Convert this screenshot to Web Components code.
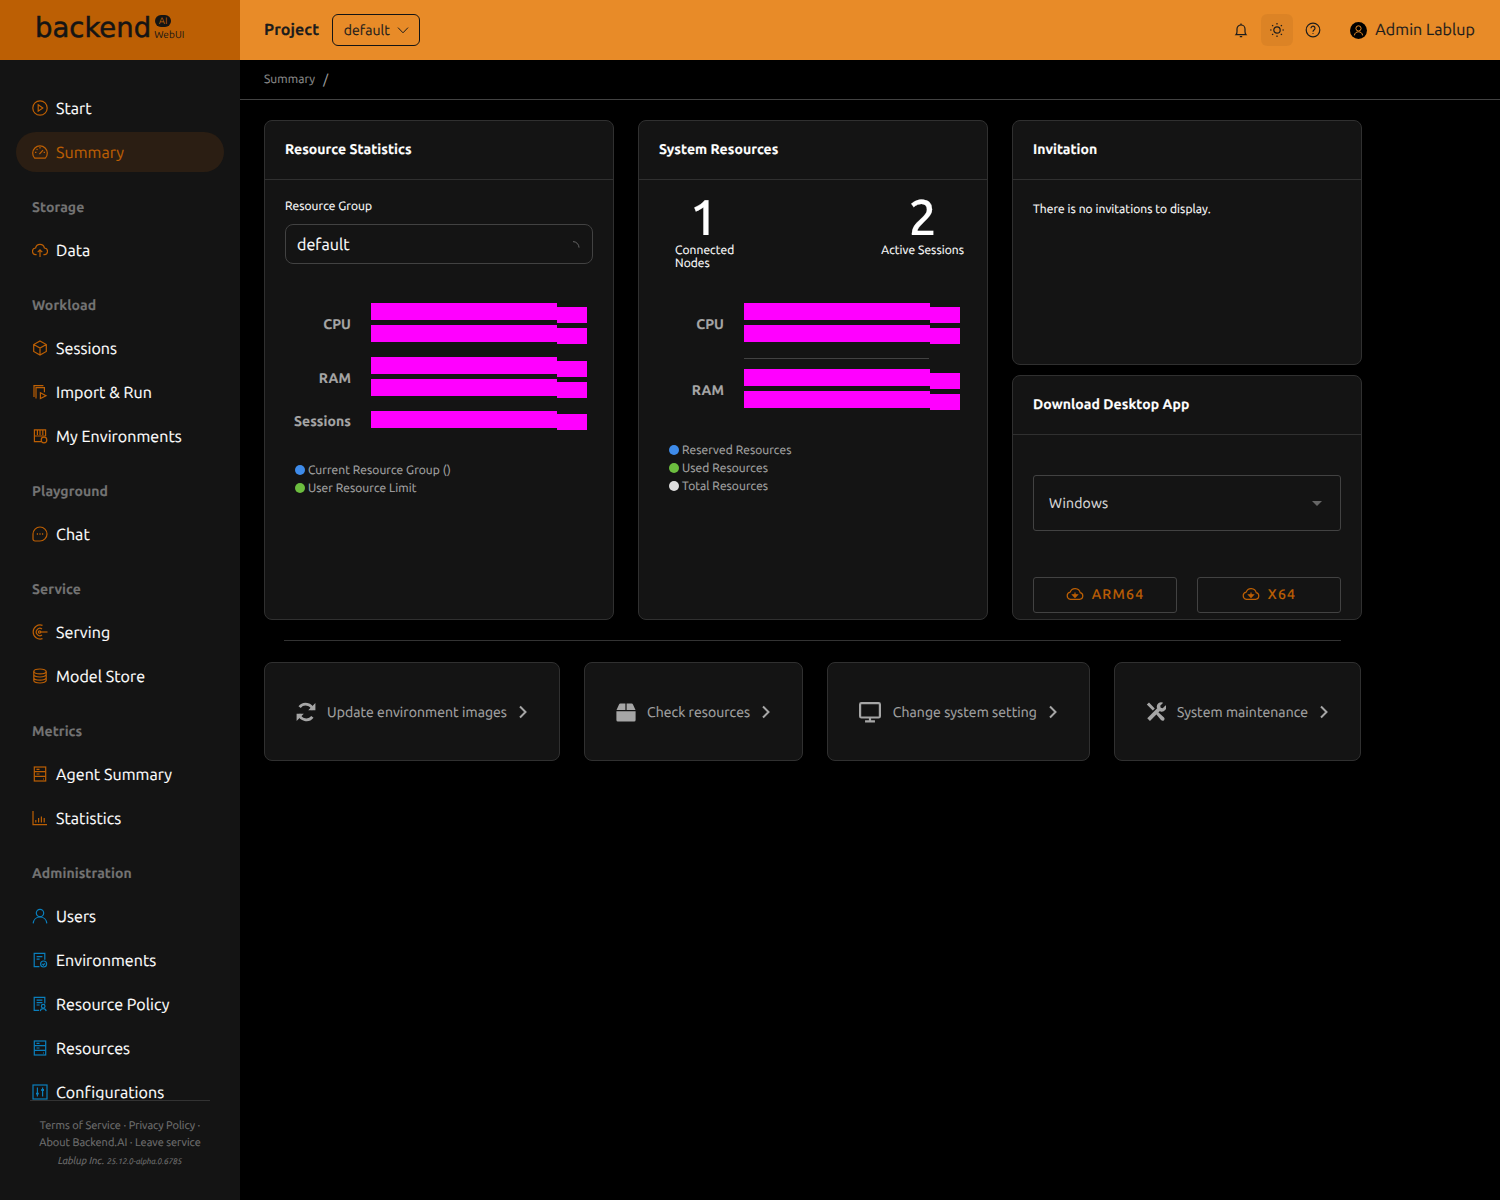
<!DOCTYPE html>
<html lang="en">
<head>
<meta charset="utf-8">
<title>Backend.AI WebUI</title>
<style>
	html, body {margin:0; height:100%; background:#000; overflow:hidden;}
	body {font-family:Ubuntu, Lato, "Noto Sans", sans-serif; color:#fff; text-rendering:geometricPrecision; letter-spacing:.08px; -webkit-text-stroke:.15px;}
</style>
</head>
<body>

<app-shell>
	<side-bar slot="sidebar">
		<nav-item icon="start">Start</nav-item>
		<nav-item icon="summary" active>Summary</nav-item>
		<nav-label>Storage</nav-label>
		<nav-item icon="data">Data</nav-item>
		<nav-label>Workload</nav-label>
		<nav-item icon="sessions">Sessions</nav-item>
		<nav-item icon="importrun">Import &amp; Run</nav-item>
		<nav-item icon="myenv">My Environments</nav-item>
		<nav-label>Playground</nav-label>
		<nav-item icon="chat">Chat</nav-item>
		<nav-label>Service</nav-label>
		<nav-item icon="serving">Serving</nav-item>
		<nav-item icon="modelstore">Model Store</nav-item>
		<nav-label>Metrics</nav-label>
		<nav-item icon="server">Agent Summary</nav-item>
		<nav-item icon="stats">Statistics</nav-item>
		<nav-label>Administration</nav-label>
		<nav-item icon="users" admin>Users</nav-item>
		<nav-item icon="envdoc" admin>Environments</nav-item>
		<nav-item icon="policy" admin>Resource Policy</nav-item>
		<nav-item icon="server" admin>Resources</nav-item>
		<nav-item icon="config" admin>Configurations</nav-item>
	</side-bar>

	<top-bar slot="main"></top-bar>
	<crumb-bar slot="main">Summary</crumb-bar>

	<dash-board slot="main">
		<dash-card title="Resource Statistics" slot="stats">
			<group-select></group-select>
			<bar-panel label-width="58" style="margin:39px 0 0 8px">
				<bar-group label="CPU">
					<mag-bar drop="4"></mag-bar>
					<mag-bar drop="3"></mag-bar>
				</bar-group>
				<bar-group label="RAM">
					<mag-bar drop="4"></mag-bar>
					<mag-bar drop="3"></mag-bar>
				</bar-group>
				<bar-group label="Sessions">
					<mag-bar drop="3"></mag-bar>
				</bar-group>
			</bar-panel>
			<chart-legend style="margin:32px 0 0 10px">
				<legend-item color="#3e8bea">Current Resource Group ()</legend-item>
				<legend-item color="#6cbd3f">User Resource Limit</legend-item>
			</chart-legend>
		</dash-card>

		<dash-card title="System Resources" slot="system" flush>
			<count-row>
				<big-count value="1" style="width:58px">Connected Nodes</big-count>
				<big-count value="2">Active Sessions</big-count>
			</count-row>
			<bar-panel label-width="65" style="margin:33px 0 0 0">
				<bar-group label="CPU">
					<mag-bar drop="4"></mag-bar>
					<mag-bar drop="3"></mag-bar>
				</bar-group>
				<rule-line></rule-line>
				<bar-group label="RAM">
					<mag-bar drop="4"></mag-bar>
					<mag-bar drop="3"></mag-bar>
				</bar-group>
			</bar-panel>
			<chart-legend style="margin:32px 0 0 10px">
				<legend-item color="#3e8bea">Reserved Resources</legend-item>
				<legend-item color="#6cbd3f">Used Resources</legend-item>
				<legend-item color="#e0e0e0">Total Resources</legend-item>
			</chart-legend>
		</dash-card>

		<dash-card title="Invitation" slot="invite">
			<span style="font-size:12px;line-height:18px;display:block;margin-top:1px">There is no invitations to display.</span>
		</dash-card>

		<dash-card title="Download Desktop App" slot="download">
			<download-form></download-form>
		</dash-card>

		<action-card icon="sync" slot="actions">Update environment images</action-card>
		<action-card icon="box" slot="actions">Check resources</action-card>
		<action-card icon="monitor" slot="actions">Change system setting</action-card>
		<action-card icon="tools" slot="actions">System maintenance</action-card>
	</dash-board>
</app-shell>

<script>
const ICONS = {
	// sidebar icons, 16 box
	start: `<circle cx="8" cy="8" r="7.2"/><path d="M6.2 4.8 10.8 8l-4.6 3.2z"/>`,
	summary: `<path d="M2.7 14.2a7.3 7.3 0 1 1 10.6 0z"/><path d="M7.4 10.2 11 6.2M8 3v1.4M3 8.4h1.4M11.6 8.4H13M4.6 4.9l.9.9"/>`,
	data: `<path d="M4.6 12.6H4a3.3 3.3 0 0 1-.4-6.6 4.5 4.5 0 0 1 8.8 0 3.3 3.3 0 0 1-.4 6.6h-.6"/><path d="M8 15V8M5.7 10.2 8 7.9l2.3 2.3"/>`,
	sessions: `<path d="M8 1l6.3 3.5v7L8 15l-6.3-3.5v-7zM1.7 4.5 8 8l6.3-3.5M8 8v7"/>`,
	importrun: `<path d="M2 13V1.6h9.4M4 14.6V3.6h8.4v4.6"/><path d="M8.4 8.8v5.8l5.6-2.9z"/>`,
	myenv: `<path d="M9 13.6H2.4V1.8h11.2v6.4"/><path d="M5.4 2v5M8 2v5M10.8 2v5M2.4 8h11"/><circle cx="12" cy="12" r="2.8"/>`,
	chat: `<path d="M8 1a7 7 0 1 1 0 14H3a2 2 0 0 1-2-2V8a7 7 0 0 1 7-7z"/><path d="M4.8 8h1.2M7.4 8h1.2M10 8h1.2" stroke-width="1.4"/>`,
	serving: `<path d="M10.5 1.4A7 7 0 1 0 10.5 14.6M10 4.9A3.7 3.7 0 1 0 10 11.1"/><circle cx="7.6" cy="8" r="1.2"/><path d="M8 8h7.5"/>`,
	modelstore: `<ellipse cx="8" cy="3.4" rx="6.2" ry="2.4"/><path d="M1.8 3.4v9.2c0 1.3 2.8 2.4 6.2 2.4s6.2-1.1 6.2-2.4V3.4M1.8 6.6c0 1.3 2.8 2.4 6.2 2.4s6.2-1.1 6.2-2.4M1.8 9.8c0 1.3 2.8 2.4 6.2 2.4s6.2-1.1 6.2-2.4"/>`,
	server: `<rect x="2.3" y="1" width="11.4" height="14"/><path d="M2.3 5.7h11.4M2.3 10.4h11.4M4.5 3.4h3M4.5 8h3M11 13h1"/>`,
	stats: `<path d="M1 1v13.6h14"/><path d="M3.8 12.5v-2.5M6.6 12.5V8M9.4 12.5V6.5M12.2 12.5V8"/>`,
	users: `<circle cx="8" cy="5" r="3.7"/><path d="M1.2 15.4c.3-3.6 3-6.4 6.8-6.4s6.5 2.8 6.8 6.4"/>`,
	envdoc: `<path d="M7.4 14.6H2.2V1.4h10.6v6.4"/><path d="M4.6 4.6h5.8M4.6 7.2h3"/><circle cx="11.6" cy="12" r="3"/><path d="M10.4 12l1 1 1.4-1.6"/>`,
	policy: `<path d="M7 14.4H2.2V1.4h10.6v6"/><path d="M4.6 4.2h5.8M4.6 6.6h5.8M4.6 9h3"/><circle cx="11.2" cy="10.2" r="1.8"/><path d="M8.2 15.2c.3-1.6 1.5-2.6 3-2.6s2.7 1 3 2.6"/>`,
	config: `<rect x="1" y="1" width="14" height="14"/><path d="M5.4 3.4v9.2M10.6 3.4v9.2"/><path d="M4 9.6h2.8M9.2 6h2.8" stroke-width="1.8"/>`,
	// header icons, 16 box
	bell: `<path d="M3 12.6c.8-.9 1-1.6 1-3.2V7a4 4 0 0 1 8 0v2.4c0 1.6.2 2.3 1 3.2z"/><path d="M6.8 14.6h2.4M8 1.4V3"/>`,
	sun: `<circle cx="8" cy="8" r="3.2"/><path d="M8 1v1.6M8 13.4V15M1 8h1.6M13.4 8H15M3.1 3.1l1.1 1.1M11.8 11.8l1.1 1.1M3.1 12.9l1.1-1.1M11.8 4.2l1.1-1.1"/>`,
	help: `<circle cx="8" cy="8" r="6.8"/><path d="M6 6.2a2 2 0 1 1 3.2 1.6C8.4 8.4 8 8.8 8 9.8M8 11.2v.8"/>`,
	// download cloud, 18 wide
	cloud: `<path d="M4.4 14.4h9.2a3.4 3.4 0 0 0 .6-6.7 5.2 5.2 0 0 0-10-.6 3.7 3.7 0 0 0 .2 7.3z"/><path d="M9 7.4v3M6.6 9.8h4.8L9 12.4z" fill="currentColor"/>`,
	// action icons, 20 box
	sync: `<path d="M17 8A7.6 7.6 0 0 0 3.6 5.2M3 12a7.6 7.6 0 0 0 13.4 2.8" stroke-width="2.8"/><path d="M19.4 1v7.2h-7.2zM.6 19v-7.2h7.2z" fill="currentColor" stroke="none"/>`,
	box: `<path d="M.5 8 3 2.4A1.5 1.5 0 0 1 4.4 1.4H9.4V8zM10.6 1.4h5a1.5 1.5 0 0 1 1.4 1L19.5 8h-8.9zM.4 9.2h19.2V18a1.5 1.5 0 0 1-1.5 1.5H1.9A1.5 1.5 0 0 1 .4 18z" fill="currentColor" stroke="none"/>`,
	monitor: `<rect x="1" y="2" width="18" height="13" rx="1.2" stroke-width="2"/><path d="M10 15v3M5.5 18.6h9" stroke-width="2"/>`,
	tools: `<path d="M.8 2.6 3 .6 8.8 6.4 6.8 8.4zM9.6 11.4l1.8-1.8 6.4 5.6c1 1 1 2.2.2 3s-2 .8-3-.2z" fill="currentColor" stroke="none"/><path d="M2.6 17.6 13 7.2" stroke-width="3.8"/><path d="M11 6a4.4 4.4 0 0 1 6.2-5.2l-3 3 .5 2 2 .5 3-3a4.4 4.4 0 0 1-5.2 6.2z" fill="currentColor" stroke="none"/>`
};

class uiIcon extends HTMLElement {
	connectedCallback() {
		const size = this.getAttribute('size') || 16;
		const box = this.getAttribute('box') || 16;
		const line = this.getAttribute('line') || 1.2;
		this.attachShadow({ mode: 'open' }).innerHTML = `
			<style>:host {display:inline-flex; flex:none; width:${size}px; height:${size}px;} svg {display:block;}</style>
			<svg width="${size}" height="${size}" viewBox="0 0 ${box} ${box}" fill="none" stroke="currentColor" stroke-width="${line}">${ICONS[this.getAttribute('name')] || ''}</svg>`;
	}
}

class appShell extends HTMLElement {
	connectedCallback() {
		this.attachShadow({ mode: 'open' }).innerHTML = `
			<style>
			:host {display:grid; grid-template-columns:240px 1fr; height:100vh;}
			.main {display:flex; flex-direction:column; min-width:0;}
			</style>
			<slot name="sidebar"></slot>
			<div class="main"><slot name="main"></slot></div>`;
	}
}

class sideBar extends HTMLElement {
	connectedCallback() {
		this.attachShadow({ mode: 'open' }).innerHTML = `
			<style>
			:host {display:flex; flex-direction:column; height:100vh; background:#141414;}
			.logo {flex:none; height:60px; background:#bc5f04; color:#141414; display:flex; padding-left:35px; box-sizing:border-box;}
			.word {font:400 27.5px/56px "DejaVu Sans", sans-serif; -webkit-text-stroke:.5px #141414; letter-spacing:0;}
			.mark {margin:15px 0 0 3px; display:flex; flex-direction:column; align-items:flex-start; -webkit-text-stroke:0;}
			.ai {background:#141414; color:#bc5f04; font-size:9.5px; line-height:12px; width:16px; text-align:center; border-radius:6px; margin-left:1px;}
			.web {font-size:10px; line-height:13px; margin-top:1px;}
			nav {flex:1; min-height:0; overflow:hidden; padding:28px 16px 0;}
			footer {flex:none; height:100px; margin:0 30px; box-sizing:border-box; border-top:1px solid #333; padding-top:17px; color:#707070; font-size:11px; line-height:17px; text-align:center; letter-spacing:0;}
			.ver {font-style:italic; font-size:10px; line-height:18px;}
			.ver small {font-size:8px;}
			</style>
			<div class="logo">
				<span class="word">backend</span>
				<span class="mark"><span class="ai">AI</span><span class="web">WebUI</span></span>
			</div>
			<nav><slot></slot></nav>
			<footer>
				<div>Terms of Service · Privacy Policy ·</div>
				<div>About Backend.AI · Leave service</div>
				<div class="ver">Lablup Inc. <small>25.12.0-alpha.0.6785</small></div>
			</footer>`;
	}
}

class navItem extends HTMLElement {
	connectedCallback() {
		const tint = this.hasAttribute('admin') ? '#0a7fbd' : '#bc5f04';
		this.attachShadow({ mode: 'open' }).innerHTML = `
			<style>
			:host {display:flex; align-items:center; gap:8px; height:40px; margin-bottom:4px; padding-left:16px; border-radius:20px; font-size:16px; color:#fff;}
			:host([active]) {background:#2b1e13; color:#bc5f04;}
			ui-icon {color:${tint};}
			span {padding-top:2px;}
			</style>
			<ui-icon name="${this.getAttribute('icon')}"></ui-icon><span><slot></slot></span>`;
	}
}

class navLabel extends HTMLElement {
	connectedCallback() {
		this.attachShadow({ mode: 'open' }).innerHTML = `
			<style>:host {display:block; margin:24px 0 12px; padding-left:16px; height:22px; line-height:22px; font-size:14px; font-weight:700; color:#737373;}</style>
			<slot></slot>`;
	}
}

class topBar extends HTMLElement {
	connectedCallback() {
		this.attachShadow({ mode: 'open' }).innerHTML = `
			<style>
			:host {display:flex; flex:none; align-items:center; height:60px; padding:0 25px 0 24px; background:#e88b28; color:#1c1c1c;}
			b {font-size:16px; margin-right:12.6px;}
			.project {display:flex; align-items:center; gap:7px; height:32px; box-sizing:border-box; padding:0 10px 0 11px; width:88px; border:1px solid #141414; border-radius:6px; font-size:14px;}
			.project svg {flex:none;}
			.tools {margin-left:auto; display:flex; align-items:center; gap:4px;}
			.btn {display:flex; align-items:center; justify-content:center; width:32px; height:32px; border-radius:6px;}
			.btn.on {background:rgba(0,0,0,.05);}
			.user {display:flex; align-items:center; gap:8px; margin-left:17px; font-size:16px;}
			.avatar {display:block;}
			</style>
			<b>Project</b>
			<div class="project">default
				<svg width="12" height="12" viewBox="0 0 12 12" fill="none" stroke="#1c1c1c"><path d="M1 3.6 6 8.8l5-5.2"/></svg>
			</div>
			<div class="tools">
				<span class="btn"><ui-icon name="bell"></ui-icon></span>
				<span class="btn on"><ui-icon name="sun"></ui-icon></span>
				<span class="btn"><ui-icon name="help"></ui-icon></span>
				<span class="user">
					<svg class="avatar" width="17" height="17" viewBox="0 0 17 17"><circle cx="8.5" cy="8.5" r="8.5" fill="#000"/><g fill="none" stroke="#e88b28"><circle cx="8.5" cy="6.4" r="2.6"/><path d="M4.4 13.4c.3-2.4 2-3.6 4.1-3.6s3.8 1.2 4.1 3.6"/></g></svg>
					Admin Lablup
				</span>
			</div>`;
	}
}

class crumbBar extends HTMLElement {
	connectedCallback() {
		this.attachShadow({ mode: 'open' }).innerHTML = `
			<style>
			:host {display:flex; flex:none; align-items:center; height:40px; box-sizing:border-box; padding:0 24px; border-bottom:1px solid #424242; color:#8c8c8c; font-size:12px;}
			i {margin-left:8px; font-style:normal; color:#a6a6a6; font-size:13px;}
			</style>
			<slot></slot><i>/</i>`;
	}
}

class dashBoard extends HTMLElement {
	connectedCallback() {
		this.attachShadow({ mode: 'open' }).innerHTML = `
			<style>
			:host {display:block; padding:20px 24px;}
			.cards {display:grid; grid-template-columns:repeat(3, 350px); gap:24px;}
			.right {display:flex; flex-direction:column; gap:10px; height:500px;}
			::slotted([slot=stats]), ::slotted([slot=system]) {height:500px;}
			::slotted([slot=invite]), ::slotted([slot=download]) {height:245px;}
			hr {margin:20px 20px 21px; width:1057px; height:1px; border:0; background:#333;}
			.actions {display:flex; gap:24px;}
			</style>
			<div class="cards">
				<slot name="stats"></slot>
				<slot name="system"></slot>
				<div class="right"><slot name="invite"></slot><slot name="download"></slot></div>
			</div>
			<hr>
			<div class="actions"><slot name="actions"></slot></div>`;
	}
}

class dashCard extends HTMLElement {
	connectedCallback() {
		const padTop = this.hasAttribute('flush') ? 0 : 20;
		this.attachShadow({ mode: 'open' }).innerHTML = `
			<style>
			:host {display:flex; flex-direction:column; box-sizing:border-box; background:#141414; border:1px solid #303030; border-radius:8px; overflow:hidden; color:#fff;}
			h2 {flex:none; margin:0; height:59px; box-sizing:border-box; line-height:57px; padding:0 20px; font-size:14px; font-weight:700; border-bottom:1px solid #303030;}
			.body {flex:1; min-height:0; padding:${padTop}px 20px 0;}
			</style>
			<h2>${this.getAttribute('title')}</h2>
			<div class="body"><slot></slot></div>`;
	}
}

class groupSelect extends HTMLElement {
	connectedCallback() {
		this.attachShadow({ mode: 'open' }).innerHTML = `
			<style>
			:host {display:block;}
			label {display:block; font-size:12px; line-height:12px; margin:1px 0 11px;}
			.box {display:flex; align-items:center; justify-content:space-between; height:40px; box-sizing:border-box; padding:2px 11px 0; border:1px solid #424242; border-radius:8px; font-size:16px;}
			</style>
			<label>Resource Group</label>
			<div class="box">default
				<svg width="8" height="8" viewBox="0 0 8 8" fill="none" stroke="#666"><path d="M0 .6A6 6 0 0 1 6 6.6"/></svg>
			</div>`;
	}
}

class barPanel extends HTMLElement {
	connectedCallback() {
		this.style.setProperty('--label-width', this.getAttribute('label-width') + 'px');
		this.attachShadow({ mode: 'open' }).innerHTML = `
			<style>:host {display:flex; flex-direction:column; gap:15px;}</style>
			<slot></slot>`;
	}
}

class barGroup extends HTMLElement {
	connectedCallback() {
		this.attachShadow({ mode: 'open' }).innerHTML = `
			<style>
			:host {display:flex; align-items:center; gap:20px;}
			b {flex:none; width:var(--label-width); text-align:right; font-size:14px; line-height:14px; color:#a6a6a6; padding-top:1px; margin-bottom:-1px;}
			.bars {display:flex; flex-direction:column; gap:5px;}
			</style>
			<b>${this.getAttribute('label')}</b>
			<div class="bars"><slot></slot></div>`;
	}
}

class magBar extends HTMLElement {
	connectedCallback() {
		this.attachShadow({ mode: 'open' }).innerHTML = `
			<style>
			:host {display:flex; align-items:flex-start; height:17px;}
			.long {width:186px; height:17px; background:#f0f;}
			.tail {width:30px; height:16px; background:#f0f; margin-top:${this.getAttribute('drop')}px;}
			</style>
			<div class="long"></div><div class="tail"></div>`;
	}
}

class ruleLine extends HTMLElement {
	connectedCallback() {
		this.attachShadow({ mode: 'open' }).innerHTML = `
			<style>:host {display:block; height:1px; width:185px; margin:1px 0 -5px 85px; background:#424242;}</style>`;
	}
}

class chartLegend extends HTMLElement {
	connectedCallback() {
		this.attachShadow({ mode: 'open' }).innerHTML = `
			<style>:host {display:block;}</style><slot></slot>`;
	}
}

class legendItem extends HTMLElement {
	connectedCallback() {
		this.attachShadow({ mode: 'open' }).innerHTML = `
			<style>
			:host {display:flex; align-items:center; gap:3px; height:18px; font-size:12px; color:#a6a6a6;}
			i {width:10px; height:10px; border-radius:50%; background:${this.getAttribute('color')}; margin-top:1px;}
			span {padding-top:2px;}
			</style>
			<i></i><span><slot></slot></span>`;
	}
}

class countRow extends HTMLElement {
	connectedCallback() {
		this.attachShadow({ mode: 'open' }).innerHTML = `
			<style>:host {display:flex; justify-content:space-between; align-items:flex-start; padding:13px 3px 0 16px;}</style>
			<slot></slot>`;
	}
}

class bigCount extends HTMLElement {
	connectedCallback() {
		this.attachShadow({ mode: 'open' }).innerHTML = `
			<style>
			:host {display:flex; flex-direction:column; align-items:center; font-size:12px; line-height:13px; color:#fff;}
			b {font-size:50px; line-height:48px; font-weight:500; margin-bottom:3px;}
			span {align-self:flex-start;}
			</style>
			<b>${this.getAttribute('value')}</b><span><slot></slot></span>`;
	}
}

class downloadForm extends HTMLElement {
	connectedCallback() {
		this.attachShadow({ mode: 'open' }).innerHTML = `
			<style>
			:host {display:block; padding-top:20px;}
			.os {display:flex; align-items:center; justify-content:space-between; height:56px; box-sizing:border-box; padding:0 18px 0 15px; border:1px solid #424242; border-radius:3px; font-size:14px; letter-spacing:.2px; color:#ddd;}
			.os i {border:5px solid transparent; border-top-color:#666; border-bottom:0;}
			.row {display:flex; gap:20px; margin-top:46px;}
			</style>
			<div class="os">Windows<i></i></div>
			<div class="row"><dl-button>ARM64</dl-button><dl-button>X64</dl-button></div>`;
	}
}

class dlButton extends HTMLElement {
	connectedCallback() {
		this.attachShadow({ mode: 'open' }).innerHTML = `
			<style>
			:host {display:flex; flex:1; align-items:center; justify-content:center; gap:8px; height:36px; box-sizing:border-box; padding-bottom:2px; border:1px solid #424242; border-radius:3px; color:#bc5f04; font-size:14px; font-weight:500; letter-spacing:1.25px;}
			</style>
			<ui-icon name="cloud" size="18" box="18" line="1.2"></ui-icon><slot></slot>`;
	}
}

class actionCard extends HTMLElement {
	connectedCallback() {
		const big = this.getAttribute('icon') === 'monitor';
		this.attachShadow({ mode: 'open' }).innerHTML = `
			<style>
			:host {display:flex; flex:none; align-items:center; height:99px; box-sizing:border-box; padding:0 31px; background:#141414; border:1px solid #303030; border-radius:8px; font-size:14px; color:#a6a6a6; white-space:nowrap;}
			ui-icon {margin-right:${big ? 11.7 : 11}px; color:#a6a6a6;}
			svg {margin-left:11px;}
			</style>
			<ui-icon name="${this.getAttribute('icon')}" size="${big ? 22 : 20}" box="20" line="1.6"></ui-icon>
			<slot></slot>
			<svg width="10" height="14" viewBox="0 0 10 14" fill="none" stroke="#a6a6a6" stroke-width="2"><path d="M2 1.5 7.5 7 2 12.5"/></svg>`;
	}
}

customElements.define('ui-icon', uiIcon);
customElements.define('app-shell', appShell);
customElements.define('side-bar', sideBar);
customElements.define('nav-item', navItem);
customElements.define('nav-label', navLabel);
customElements.define('top-bar', topBar);
customElements.define('crumb-bar', crumbBar);
customElements.define('dash-board', dashBoard);
customElements.define('dash-card', dashCard);
customElements.define('group-select', groupSelect);
customElements.define('bar-panel', barPanel);
customElements.define('bar-group', barGroup);
customElements.define('mag-bar', magBar);
customElements.define('rule-line', ruleLine);
customElements.define('chart-legend', chartLegend);
customElements.define('legend-item', legendItem);
customElements.define('count-row', countRow);
customElements.define('big-count', bigCount);
customElements.define('download-form', downloadForm);
customElements.define('dl-button', dlButton);
customElements.define('action-card', actionCard);
</script>
</body>
</html>
